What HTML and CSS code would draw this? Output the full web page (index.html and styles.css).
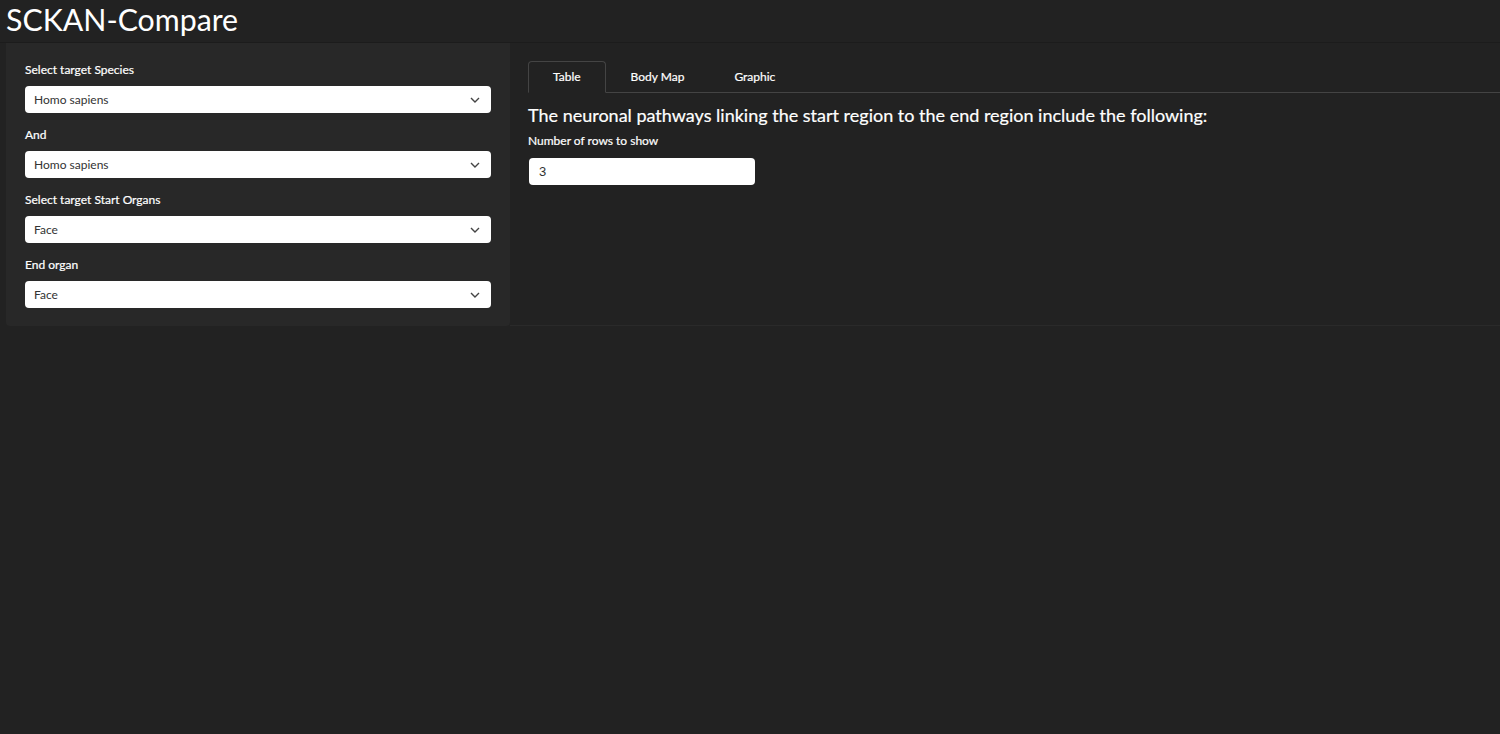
FILE: index.html
```html
<!DOCTYPE html>
<html>
<head>
<meta charset="utf-8">
<link rel="stylesheet" href="styles.css">
</head>
<body>
<header class="title-bar"><h1 class="app-title">SCKAN-Compare</h1></header>
<div class="layout">
  <aside class="sidebar">
    <div class="field">
      <label class="field-label">Select target Species</label>
      <div class="select"><span>Homo sapiens</span><svg class="chev" viewBox="0 0 10 6" width="10" height="6"><path d="M1 1 L5 5 L9 1" fill="none" stroke="#444" stroke-width="1.4"/></svg></div>
    </div>
    <div class="field">
      <label class="field-label">And</label>
      <div class="select"><span>Homo sapiens</span><svg class="chev" viewBox="0 0 10 6" width="10" height="6"><path d="M1 1 L5 5 L9 1" fill="none" stroke="#444" stroke-width="1.4"/></svg></div>
    </div>
    <div class="field">
      <label class="field-label">Select target Start Organs</label>
      <div class="select"><span>Face</span><svg class="chev" viewBox="0 0 10 6" width="10" height="6"><path d="M1 1 L5 5 L9 1" fill="none" stroke="#444" stroke-width="1.4"/></svg></div>
    </div>
    <div class="field last">
      <label class="field-label">End organ</label>
      <div class="select"><span>Face</span><svg class="chev" viewBox="0 0 10 6" width="10" height="6"><path d="M1 1 L5 5 L9 1" fill="none" stroke="#444" stroke-width="1.4"/></svg></div>
    </div>
  </aside>
  <main class="main">
    <nav class="tabs">
      <div class="tab active">Table</div>
      <div class="tab">Body Map</div>
      <div class="tab">Graphic</div>
    </nav>
    <h3 class="heading">The neuronal pathways linking the start region to the end region include the following:</h3>
    <label class="field-label small">Number of rows to show</label>
    <div class="num-input">3</div>
  </main>
</div>
</body>
</html>
```
FILE: styles.css
```css
html, body {
  margin: 0;
  padding: 0;
  background: #222222;
  color: #ffffff;
  font-family: Lato, "Open Sans", sans-serif;
}
.title-bar {
  height: 43px;
  border-bottom: 1px solid #1c1c1c;
  padding-left: 6px;
  box-sizing: border-box;
}
.app-title {
  margin: 0;
  font-size: 30.3px;
  font-weight: 400;
  line-height: 38px;
  color: #ffffff;
}
.layout {
  display: flex;
  padding-left: 6px;
}
.sidebar {
  width: 504px;
  box-sizing: border-box;
  background: #282828;
  padding: 19px 19px 18px 19px;
  border-radius: 0 0 4px 4px;
  height: 283px;
}
.field {
  margin-bottom: 14px;
}
.field.last { margin-bottom: 0; }
.field-label {
  display: block;
  font-size: 12px;
  line-height: 16px;
  margin-bottom: 8px;
  font-weight: 400;
  color: #ffffff;
  -webkit-text-stroke: 0.2px #fff;
}
.select {
  height: 27px;
  width: 466px;
  box-sizing: border-box;
  background: #ffffff;
  border-radius: 4px;
  display: flex;
  align-items: center;
  justify-content: space-between;
  padding: 0 11px 0 9px;
  color: #333;
  font-size: 12px;
}
.chev { display: block; }
.main {
  flex: 1;
  height: 283px;
  border-bottom: 1px solid #2a2a2a;
  padding: 18px 0 0 18px;
  box-sizing: border-box;
}
.tabs {
  display: flex;
  border-bottom: 1px solid #444;
  height: 31px;
}
.tab {
  font-size: 12px;
  color: #fff;
  line-height: 30px;
  padding: 0 24px;
  border: 1px solid transparent;
  border-radius: 4px 4px 0 0;
  margin-bottom: -1px;
  -webkit-text-stroke: 0.2px #fff;
}
.tab.active {
  border-color: #444;
  border-bottom-color: #222;
  background: #222;
}
.heading {
  margin: 11px 0 7px 0;
  font-size: 18px;
  font-weight: 400;
  line-height: 22px;
  -webkit-text-stroke: 0.2px #fff;
}
.field-label.small {
  font-size: 12px;
  margin-bottom: 9px;
}
.num-input {
  width: 226px;
  height: 27px;
  margin-left: 1px;
  box-sizing: border-box;
  background: #fff;
  border-radius: 4px;
  color: #333;
  font-size: 13px;
  line-height: 27px;
  padding-left: 10px;
  font-family: "Liberation Sans", Arial, sans-serif;
}
```
